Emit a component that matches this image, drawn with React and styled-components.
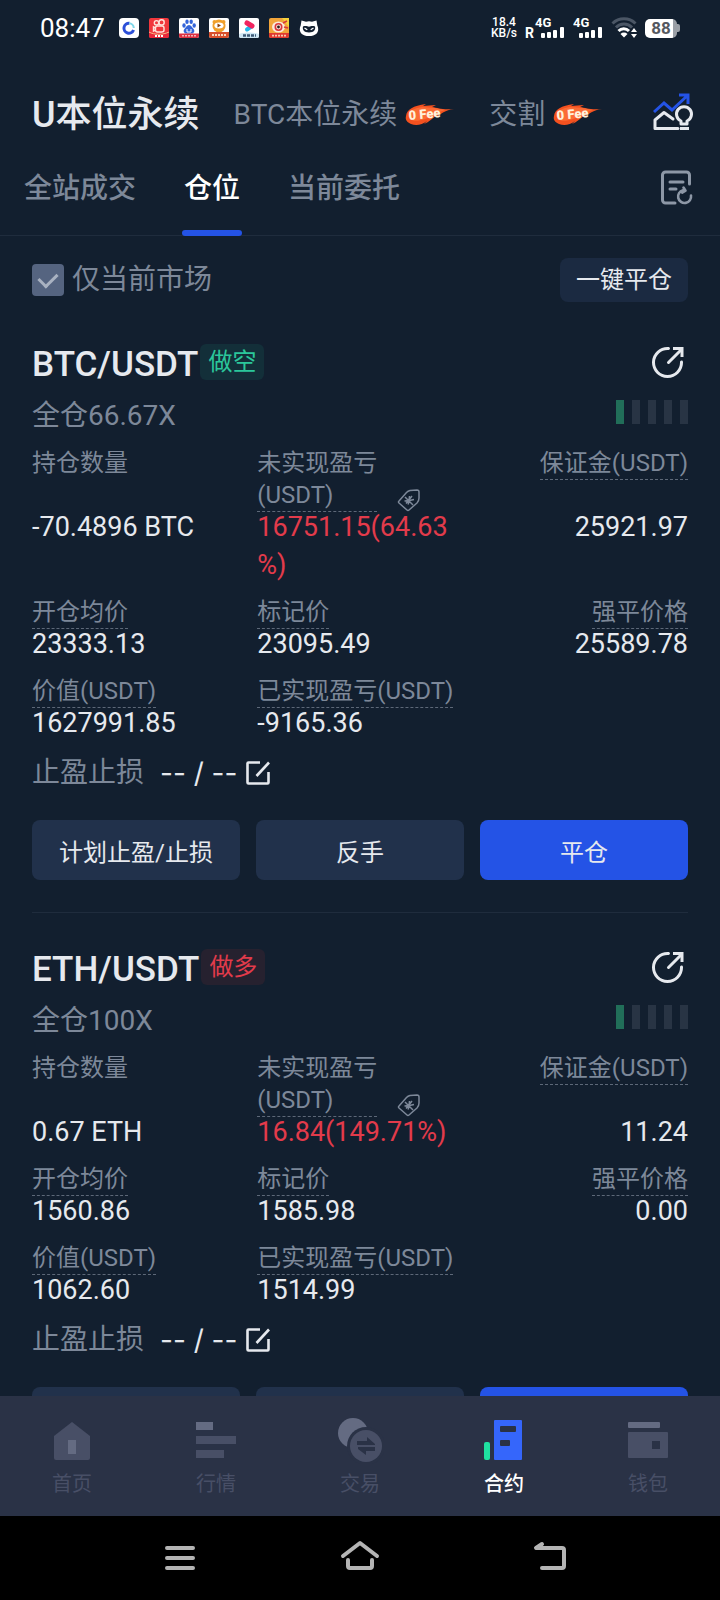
import styled, { createGlobalStyle, ThemeProvider, css } from "styled-components";

const theme = {
  colors: {
    bg: "#121f2f",
    text: "#e6e9ee",
    muted: "#7d8899",
    line: "#1f2c3d",
    panel: "#21314b",
    panelDark: "#1b2a41",
    blue: "#2453e6",
    red: "#e23b4b",
    green: "#2bc79b",
    tabBar: "#2a3246",
    tabIcon: "#484f66",
    tabIconLight: "#646b82",
  },
};

const GlobalStyle = createGlobalStyle`
  * {
    box-sizing: border-box;
    margin: 0;
    padding: 0;
  }

  body {
    background-color: ${theme.colors.bg};
    color: ${theme.colors.text};
    font-family: Roboto, "Noto Sans CJK SC", sans-serif;
  }

  button {
    border: 0;
    background: none;
    color: inherit;
    font-family: inherit;
    cursor: pointer;
  }

  svg {
    display: block;
    flex-shrink: 0;
  }
`;

const Screen = styled.div`
  display: flex;
  flex-direction: column;
  height: 100vh;
`;

const StatusBar = styled.div`
  display: flex;
  align-items: center;
  justify-content: space-between;
  height: 56px;
  padding: 0 40px;
  flex-shrink: 0;
  color: #fff;
`;

const StatusGroup = styled.div`
  display: flex;
  align-items: center;
  gap: ${({ $gap }) => $gap}px;
`;

const Clock = styled.span`
  font-size: 26px;
  line-height: 32px;
  margin-right: 4px;
`;

const NetSpeed = styled.div`
  display: flex;
  flex-direction: column;
  font-size: 12px;
  font-weight: 500;
  line-height: 11px;
  text-align: center;
`;

const Battery = styled.div`
  display: flex;
  align-items: center;

  span {
    width: 32px;
    border-radius: 5px;
    background: linear-gradient(90deg, #fff 88%, #9a9fa6 88%);
    color: #55585e;
    font-size: 17px;
    font-weight: 700;
    line-height: 19px;
    text-align: center;
  }

  &::after {
    content: "";
    width: 3px;
    height: 8px;
    border-radius: 0 2px 2px 0;
    background-color: #9a9fa6;
  }
`;

const Header = styled.header`
  display: flex;
  align-items: center;
  gap: 34px;
  height: 84px;
  padding: 34px 24px 0 32px;
  flex-shrink: 0;
`;

const Market = styled.button`
  display: flex;
  align-items: center;
  gap: 8px;
  white-space: nowrap;
  font-size: ${({ $active }) => ($active ? 36 : 28)}px;
  font-weight: ${({ $active }) => ($active ? 500 : 400)};
  line-height: 48px;
  color: ${({ theme, $active }) => ($active ? theme.colors.text : theme.colors.muted)};
`;

const IconButton = styled.button`
  margin-left: auto;
`;

const Tabs = styled.nav`
  display: flex;
  gap: 48px;
  height: 96px;
  padding: 0 24px;
  flex-shrink: 0;
  border-bottom: 1px solid ${({ theme }) => theme.colors.line};
`;

const Tab = styled.button`
  position: relative;
  padding-bottom: 4px;
  font-size: 28px;
  font-weight: 500;
  color: ${({ theme, $active }) => ($active ? "#fff" : theme.colors.muted)};

  ${({ $active, theme }) =>
    $active &&
    css`
      &::after {
        content: "";
        position: absolute;
        left: -2px;
        right: -2px;
        bottom: -1px;
        height: 6px;
        border-radius: 3px;
        background-color: ${theme.colors.blue};
      }
    `}
`;

const Main = styled.main`
  flex: 1;
  min-height: 0;
  overflow-y: auto;
  scrollbar-width: none;
`;

const Filter = styled.div`
  display: flex;
  align-items: center;
  justify-content: space-between;
  padding: 22px 32px 6px;
`;

const CheckLabel = styled.label`
  display: flex;
  align-items: center;
  gap: 8px;
  font-size: 28px;
  line-height: 44px;
  color: ${({ theme }) => theme.colors.muted};
`;

const Check = styled.input`
  appearance: none;
  display: grid;
  place-content: center;
  width: 32px;
  height: 32px;
  border-radius: 4px;
  background-color: #556480;

  &:checked::after {
    content: "";
    width: 9px;
    height: 15px;
    margin-bottom: 5px;
    border: solid #a9b2c1;
    border-width: 0 3px 3px 0;
    transform: rotate(45deg);
  }
`;

const CloseAll = styled.button`
  padding: 0 16px;
  border-radius: 8px;
  background-color: ${({ theme }) => theme.colors.panelDark};
  font-size: 24px;
  line-height: 44px;
`;

const Card = styled.section`
  margin: 0 32px;
  padding: 36px 0 32px;
  border-bottom: 1px solid ${({ theme }) => theme.colors.line};
`;

const CardHead = styled.div`
  display: flex;
  align-items: flex-start;
  gap: 2px;
  height: 36px;

  h2 {
    font-size: 35px;
    font-weight: 500;
    line-height: 42px;
  }
`;

const Side = styled.span`
  padding: 0 8px;
  border-radius: 6px;
  font-size: 24px;
  line-height: 36px;
  color: ${({ theme, $long }) => ($long ? theme.colors.red : theme.colors.green)};
  background-color: ${({ $long }) => ($long ? "#26212f" : "#132f39")};
`;

const SubHead = styled.div`
  display: flex;
  align-items: center;
  justify-content: space-between;
  padding: 16px 0 12px;
  font-size: 28px;
  line-height: 39px;
  color: ${({ theme }) => theme.colors.muted};
`;

const Gauge = styled.div`
  display: flex;
  gap: 8px;
  padding-bottom: 8px;
`;

const GaugeBar = styled.i`
  width: 8px;
  height: 24px;
  background-color: ${({ $on }) => ($on ? "#216e59" : "#283444")};
`;

const Fields = styled.dl`
  display: grid;
  grid-template-columns: 34fr 30fr 35fr;
`;

// label and value rows are shared, so values line up when a label wraps
const Field = styled.div`
  display: grid;
  grid-row: span 2;
  grid-template-rows: subgrid;
  padding-bottom: 12px;
  justify-items: ${({ $end }) => ($end ? "end" : "start")};

  dt {
    display: flex;
    align-items: flex-end;
    align-self: start;
    gap: 20px;
  }

  dd {
    margin-top: -4px;
    font-size: 27px;
    line-height: 38px;
    line-break: anywhere;
    color: ${({ theme, $red }) => ($red ? theme.colors.red : theme.colors.text)};
  }
`;

const FieldLabel = styled.span`
  max-width: ${({ $narrow }) => ($narrow ? "120px" : "none")};
  border-bottom: 1px dashed ${({ $plain }) => ($plain ? "transparent" : "#5d6878")};
  font-size: 24px;
  line-height: 32px;
  white-space: ${({ $narrow }) => ($narrow ? "normal" : "nowrap")};
  color: ${({ theme }) => theme.colors.muted};
`;

const StopRow = styled.div`
  display: flex;
  align-items: center;
  font-size: 28px;
  line-height: 38px;
  color: ${({ theme }) => theme.colors.muted};

  strong {
    margin: 0 8px 0 16px;
    font-family: Inter, sans-serif;
    font-size: 28px;
    font-weight: 400;
    color: ${({ theme }) => theme.colors.text};
  }
`;

const Actions = styled.div`
  display: grid;
  grid-template-columns: repeat(3, 1fr);
  gap: 16px;
  margin-top: 28px;
`;

const Action = styled.button`
  height: 60px;
  border-radius: 8px;
  font-size: 24px;
  background-color: ${({ theme, $primary }) => ($primary ? theme.colors.blue : theme.colors.panel)};
`;

const TabBar = styled.nav`
  display: flex;
  flex-shrink: 0;
  padding: 20px 0 18px;
  background-color: ${({ theme }) => theme.colors.tabBar};
`;

const TabLink = styled.a`
  flex: 1;
  display: flex;
  flex-direction: column;
  align-items: center;
  gap: 6px;
  font-size: 20px;
  font-weight: ${({ $active }) => ($active ? 500 : 400)};
  line-height: 28px;
  text-decoration: none;
  color: ${({ theme, $active }) => ($active ? "#fff" : theme.colors.tabIcon)};
`;

const SystemNav = styled.div`
  display: flex;
  justify-content: center;
  gap: 120px;
  flex-shrink: 0;
  padding: 12px 0;
  background-color: #000;
`;

const AppIcons = () => (
  <>
    <svg width="20" height="20" viewBox="0 0 20 20">
      <rect width="20" height="20" rx="4" fill="#fff" />
      <path d="M10.5 5.2A5 5 0 1 0 14.6 12" fill="none" stroke="#2c4fd8" strokeWidth="3" />
      <path d="M10 5.2A5 5 0 0 1 14.8 10" fill="none" stroke="#7fd6e8" strokeWidth="2" />
    </svg>
    <svg width="20" height="20" viewBox="0 0 20 20">
      <rect width="20" height="20" rx="2" fill="#f0373c" />
      <g fill="none" stroke="#ffe4dc" strokeWidth="1.4">
        <circle cx="7.5" cy="4.8" r="2.2" />
        <circle cx="12.6" cy="4.4" r="2.6" />
        <rect x="6.5" y="8" width="8.5" height="6" rx="2" />
        <path d="M6.5 10 4.5 9v4l2-1" />
      </g>
      <path d="M0 13c4 3 8 4 20 0v5a2 2 0 0 1-2 2H2a2 2 0 0 1-2-2z" fill="#e8283a" />
      <path d="M0 14c5 3 14 3 20 0" fill="none" stroke="#f8c08a" />
      <path d="M6 18h8" stroke="#fff" strokeWidth="2" strokeDasharray="2 1" />
    </svg>
    <svg width="20" height="20" viewBox="0 0 20 20">
      <rect width="20" height="20" rx="2" fill="#fff" />
      <g fill="#3465d9">
        <ellipse cx="5" cy="7.5" rx="1.7" ry="2.2" />
        <ellipse cx="8" cy="3.8" rx="1.7" ry="2.3" />
        <ellipse cx="12.2" cy="3.8" rx="1.7" ry="2.3" />
        <ellipse cx="15.2" cy="7.5" rx="1.7" ry="2.2" />
        <path d="M10 7c2.4 0 3 2.4 4.6 4 1.6 1.8.4 4.6-2 4.6H7.4c-2.4 0-3.6-2.8-2-4.6C7 9.4 7.6 7 10 7z" />
      </g>
      <path d="M8 11v3h4v-3" fill="none" stroke="#fff" />
      <path d="M0 15.5h20V18a2 2 0 0 1-2 2H2a2 2 0 0 1-2-2z" fill="#dd3142" />
      <path d="M3 17.8h14" stroke="#f6b3b8" strokeWidth="1.6" strokeDasharray="2 1" />
    </svg>
    <svg width="20" height="20" viewBox="0 0 20 20">
      <rect width="20" height="20" rx="2" fill="#fff" />
      <circle cx="5.5" cy="4" r="2" fill="#f0a02c" />
      <circle cx="14.5" cy="4" r="2" fill="#f0a02c" />
      <circle cx="10" cy="8" r="6.5" fill="#f0a02c" />
      <ellipse cx="10" cy="7.5" rx="4.6" ry="3" fill="#fff" />
      <path d="M8.5 5.5v4l3.5-2z" fill="#8a4310" />
      <path d="M0 14h20v4a2 2 0 0 1-2 2H2a2 2 0 0 1-2-2z" fill="#d9502c" />
      <path d="M3 17h14" stroke="#fbd9c4" strokeWidth="2" strokeDasharray="2 1" />
    </svg>
    <svg width="20" height="20" viewBox="0 0 20 20">
      <rect width="20" height="20" rx="2" fill="#fff" />
      <path d="M8 11.5 13 8" stroke="#23b7ea" strokeWidth="4" strokeLinecap="round" />
      <path d="M8 5 13 8" stroke="#f0245e" strokeWidth="5" strokeLinecap="round" />
      <path d="M0 16c6-2 14-2 20 0v2a2 2 0 0 1-2 2H2a2 2 0 0 1-2-2z" fill="#cfe6f3" />
      <path d="M4 17.5h13" stroke="#3d5a77" strokeWidth="2.4" strokeDasharray="3 1" />
    </svg>
    <svg width="20" height="20" viewBox="0 0 20 20">
      <rect width="20" height="20" rx="2" fill="#f2a53a" />
      <path d="M20 0v9L13 0z" fill="#f6d23e" />
      <ellipse cx="9.5" cy="9" rx="6.5" ry="5.5" fill="#fbe9dc" />
      <circle cx="9.500" cy="9" r="4" fill="#d9363c" />
      <circle cx="9.5" cy="9" r="2.4" fill="#fbe9dc" />
      <circle cx="9.5" cy="9" r="1.4" fill="#2a1a1c" />
      <path d="M14 5l4-2M15 9l4 1" stroke="#d9363c" strokeWidth="1.6" />
      <path d="M0 15h20v3a2 2 0 0 1-2 2H2a2 2 0 0 1-2-2z" fill="#e0392f" />
      <path d="M3 17.6h14" stroke="#fbc8b0" strokeWidth="1.6" strokeDasharray="2 1" />
    </svg>
    <svg width="20" height="20" viewBox="0 0 20 20">
      <path d="M2.5 2.500 7 3.8a10 10 0 0 1 6 0l4.5-1.3.8 5C20.5 12 19 18 10 18S-.5 12 1.7 7.5z" fill="#fff" />
      <path d="M4 8.5c3-1 4.500.3 6 .3s3-1.3 6-.3c.8 3-1 6-6 6s-6.8-3-6-6z" fill="#121f2f" />
      <path d="M5.5 10l2.8 1.8M14.5 10l-2.8 1.8" stroke="#fff" strokeWidth="1.3" />
    </svg>
  </>
);

const Signal = ({ roaming }) => (
  <svg width={roaming ? 40 : 30} height="24" viewBox={roaming ? "0 0 40 24" : "10 0 30 24"} fill="#fff" fontFamily="Roboto" fontWeight="700">
    {roaming && <text x="0" y="22" fontSize="14">R</text>}
    <text x="10" y="11" fontSize="13">4G</text>
    <rect x="16" y="17" width="4" height="5" rx="1" />
    <rect x="22" y="16" width="4" height="6" rx="1" />
    <rect x="28" y="14" width="4" height="8" rx="1" />
    <rect x="35" y="11" width="4" height="11" rx="1" />
  </svg>
);

const Wifi = () => (
  <svg width="26" height="22" viewBox="0 0 26 22" fill="none">
    <path d="M1.500 6.5a16.5 16.5 0 0 1 23 0" stroke="#4b5665" strokeWidth="3" />
    <path d="M5 10.5a11 11 0 0 1 16 0" stroke="#4b5665" strokeWidth="3" />
    <path d="M7.5 14a7.5 7.5 0 0 1 10.5 0" stroke="#fff" strokeWidth="3" />
    <path d="M13 20.5 9.5 17a5 5 0 0 1 7 0z" fill="#fff" />
    <path d="M23 11l3 4h-6zM23 21l3-4h-6z" fill="#fff" />
  </svg>
);

const FeeBadge = () => (
  <svg width="50" height="24" viewBox="0 0 50 24">
    <path d="M1 13C2 6 8 3 21 1l-3 2 13-1-4 2c6 1 10 3 22 2-9 1-13 5-18 8l2-3c-5 4-9 8-14 10l3-3c-5 4-11 5-16 3C2 19 0 17 1 13z" fill="#f4511f" />
    <path d="M3 12c2-5 7-7 14-8l13 1 10 2c-8 2-12 7-20 9-7 2-15 4-17-4z" fill="#fb6b35" />
    <text x="4" y="17" transform="rotate(-5 4 17)" fill="#fff1dc" fontFamily="Roboto" fontSize="13" fontWeight="900">
      0 Fee
    </text>
  </svg>
);

const InsightIcon = () => (
  <svg width="44" height="48" viewBox="0 0 44 48" fill="none" strokeWidth="3">
    <path d="M2 21 12 12l8 7L35 5M27 4h9v9" stroke="#2453e6" />
    <path d="M21 28 12 21.5 3 29v8.500h23" stroke="#e6e9ee" strokeLinejoin="round" strokeLinecap="round" />
    <path d="M29 33v-3a7.500 7.500 0 1 1 6 0v3zM28 37.500h9" stroke="#e6e9ee" strokeLinejoin="round" />
  </svg>
);

const OrdersIcon = () => (
  <svg width="36" height="36" viewBox="0 0 36 36" fill="none" stroke="#8d97a6" strokeWidth="3" strokeLinecap="round" strokeLinejoin="round">
    <path d="M29.5 14V5a3 3 0 0 0-3-3H5.5a3 3 0 0 0-3 3v25a3 3 0 0 0 3 3H15M10 12h13M10 19h6" />
    <path d="M31 25.5a6.500 6.500 0 1 1-8-5.300M23.500 17.500l2 3.200-3.300 2" strokeWidth="2.6" />
  </svg>
);

const ShareIcon = () => (
  <svg width="36" height="36" viewBox="0 0 36 36" fill="none" stroke="#e6e9ee" strokeWidth="3">
    <path d="M16.5 4.5A14 14 0 1 0 29.500 18" strokeLinecap="round" />
    <path d="M16.500 18.500 29 6" strokeLinecap="round" />
    <path d="M21 4.500h9V13" />
    <path d="M25 4h6v6z" fill="#e6e9ee" stroke="none" />
  </svg>
);

const TagIcon = () => (
  <svg width="24" height="24" viewBox="0 0 24 24" fill="none" stroke="#7d8899" strokeWidth="1.5" strokeLinejoin="round">
    <path d="M2 13 9.500 4.500Q11 3 13 2.500L20 2q2 0 2 2v6q0 3-2 5l-8 7q-1 1-2 0L2 15q-1-1 0-2z" />
    <path d="M8 9l8 8M7.500 13l4.500-.5.5-4.500M11 16.500l1.500-4 4.500-1M9 15.500 15 8" strokeWidth="1.5" />
  </svg>
);

const EditIcon = () => (
  <svg width="26" height="26" viewBox="0 0 26 26" fill="none" stroke="#e6e9ee" strokeWidth="2.6">
    <path d="M15 2.500H3.500a1 1 0 0 0-1 1v19a1 1 0 0 0 1 1h19a1 1 0 0 0 1-1V12" />
    <path d="M11.500 16 24 2.500" />
  </svg>
);

const tabIcons = {
  home: (
    <>
      <path d="M24 6 42 20v22q0 2-2 2H8q-2 0-2-2V20z" fill={theme.colors.tabIcon} />
      <rect x="20" y="24" width="8" height="14" fill={theme.colors.tabIconLight} />
    </>
  ),
  quotes: (
    <>
      <rect x="4" y="6" width="17" height="8" fill={theme.colors.tabIconLight} />
      <rect x="4" y="20" width="40" height="8" fill={theme.colors.tabIcon} />
      <rect x="4" y="34" width="28" height="8" fill={theme.colors.tabIcon} />
    </>
  ),
  trade: (
    <>
      <circle cx="17" cy="17" r="15" fill={theme.colors.tabIconLight} />
      <circle cx="30" cy="30" r="19" fill={theme.colors.tabBar} />
      <circle cx="30" cy="30" r="16" fill={theme.colors.tabIcon} />
      <path d="M21 25h10v-4l8 7v1H21zM39 35H30v4l-8-6v-2h17z" fill={theme.colors.tabBar} />
    </>
  ),
  futures: (
    <>
      <rect x="4" y="26" width="6" height="18" rx="2" fill="#1fe0a0" />
      <rect x="14" y="4" width="28" height="40" rx="1" fill="#3566fb" />
      <rect x="20" y="10" width="16" height="6" rx="1" fill={theme.colors.tabBar} />
      <rect x="20" y="24" width="10" height="6" rx="1" fill={theme.colors.tabBar} />
    </>
  ),
  wallet: (
    <>
      <rect x="4" y="6" width="32" height="6" rx="1" fill={theme.colors.tabIconLight} />
      <rect x="4" y="16" width="40" height="26" rx="1" fill={theme.colors.tabIcon} />
      <rect x="28" y="25" width="8" height="8" fill={theme.colors.tabBar} />
    </>
  ),
};

const tabs = [
  { id: "home", name: "首页" },
  { id: "quotes", name: "行情" },
  { id: "trade", name: "交易" },
  { id: "futures", name: "合约" },
  { id: "wallet", name: "钱包" },
];

const positions = [
  {
    pair: "BTC/USDT",
    side: "做空",
    long: false,
    leverage: "全仓66.67X",
    amount: "-70.4896 BTC",
    unrealized: "16751.15(64.63%)",
    margin: "25921.97",
    entry: "23333.13",
    mark: "23095.49",
    liquidation: "25589.78",
    value: "1627991.85",
    realized: "-9165.36",
  },
  {
    pair: "ETH/USDT",
    side: "做多",
    long: true,
    leverage: "全仓100X",
    amount: "0.67 ETH",
    unrealized: "16.84(149.71%)",
    margin: "11.24",
    entry: "1560.86",
    mark: "1585.98",
    liquidation: "0.00",
    value: "1062.60",
    realized: "1514.99",
  },
];

const Item = ({ label, value, plain, narrow, end, red, icon }) => (
  <Field $end={end} $red={red}>
    <dt>
      <FieldLabel $plain={plain} $narrow={narrow}>{label}</FieldLabel>
      {icon}
    </dt>
    <dd>{value}</dd>
  </Field>
);

const Position = ({ data }) => (
  <Card>
    <CardHead>
      <h2>{data.pair}</h2>
      <Side $long={data.long}>{data.side}</Side>
      <IconButton aria-label="分享">
        <ShareIcon />
      </IconButton>
    </CardHead>
    <SubHead>
      <span>{data.leverage}</span>
      <Gauge>
        {[0, 1, 2, 3, 4].map((n) => (
          <GaugeBar key={n} $on={n === 0} />
        ))}
      </Gauge>
    </SubHead>
    <Fields>
      <Item label="持仓数量" value={data.amount} plain />
      <Item label="未实现盈亏(USDT)" value={data.unrealized} narrow red icon={<TagIcon />} />
      <Item label="保证金(USDT)" value={data.margin} end />
      <Item label="开仓均价" value={data.entry} />
      <Item label="标记价" value={data.mark} />
      <Item label="强平价格" value={data.liquidation} end />
      <Item label="价值(USDT)" value={data.value} />
      <Item label="已实现盈亏(USDT)" value={data.realized} />
    </Fields>
    <StopRow>
      <span>止盈止损</span>
      <strong>-- / --</strong>
      <button aria-label="编辑">
        <EditIcon />
      </button>
    </StopRow>
    <Actions>
      <Action>计划止盈/止损</Action>
      <Action>反手</Action>
      <Action $primary>平仓</Action>
    </Actions>
  </Card>
);

const App = () => {
  return (
    <ThemeProvider theme={theme}>
      <GlobalStyle />
      <Screen>
        <StatusBar>
          <StatusGroup $gap={10}>
            <Clock>08:47</Clock>
            <AppIcons />
          </StatusGroup>
          <StatusGroup $gap={8}>
            <NetSpeed>
              <span>18.4</span>
              <span>KB/s</span>
            </NetSpeed>
            <Signal roaming />
            <Signal />
            <Wifi />
            <Battery>
              <span>88</span>
            </Battery>
          </StatusGroup>
        </StatusBar>

        <Header>
          <Market $active>U本位永续</Market>
          <Market>
            BTC本位永续
            <FeeBadge />
          </Market>
          <Market>
            交割
            <FeeBadge />
          </Market>
          <IconButton aria-label="行情分析">
            <InsightIcon />
          </IconButton>
        </Header>

        <Tabs>
          <Tab>全站成交</Tab>
          <Tab $active>仓位</Tab>
          <Tab>当前委托</Tab>
          <IconButton aria-label="历史委托">
            <OrdersIcon />
          </IconButton>
        </Tabs>

        <Main>
          <Filter>
            <CheckLabel>
              <Check type="checkbox" defaultChecked />
              仅当前市场
            </CheckLabel>
            <CloseAll>一键平仓</CloseAll>
          </Filter>
          {positions.map((item) => (
            <Position key={item.pair} data={item} />
          ))}
        </Main>

        <TabBar>
          {tabs.map(({ id, name }) => (
            <TabLink key={id} href={`#${id}`} $active={id === "futures"}>
              <svg width="48" height="48" viewBox="0 0 48 48">
                {tabIcons[id]}
              </svg>
              {name}
            </TabLink>
          ))}
        </TabBar>

        <SystemNav>
          <button aria-label="最近任务">
            <svg width="60" height="60" viewBox="0 0 60 60" fill="none" stroke="#b4b4b4" strokeWidth="4" strokeLinecap="round">
              <path d="M17 20h26M17 30h26M17 40h26" />
            </svg>
          </button>
          <button aria-label="主屏幕">
            <svg width="60" height="60" viewBox="0 0 60 60" fill="none" stroke="#b4b4b4" strokeWidth="4" strokeLinecap="round" strokeLinejoin="round">
              <path d="M13 28 30 15l17 13M18 32v6q0 2 2 2h20q2 0 2-2v-6" />
            </svg>
          </button>
          <button aria-label="返回">
            <svg width="60" height="60" viewBox="0 0 60 60" fill="none" stroke="#b4b4b4" strokeWidth="4" strokeLinecap="round" strokeLinejoin="round">
              <path d="M32 16l-6 4h26q2 0 2 2v16q0 2-2 2H32" />
            </svg>
          </button>
        </SystemNav>
      </Screen>
    </ThemeProvider>
  );
};

export default App;
